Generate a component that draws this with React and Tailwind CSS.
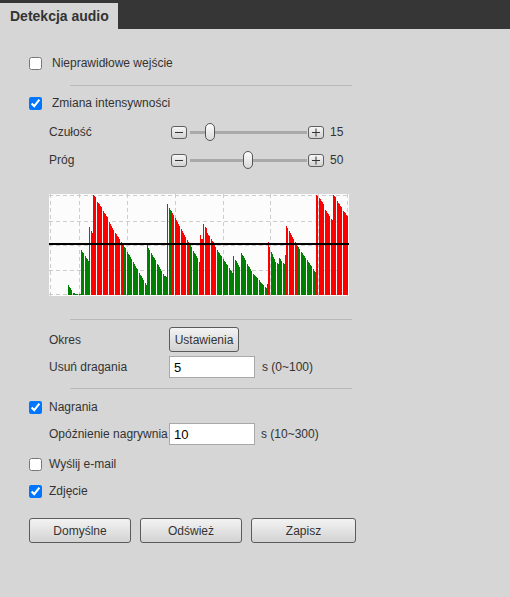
import React from "react"

// level bars: [x0, x1, h0, h1, colour]
const segs = [
    [19, 23, 10, 5, "g"],
    [24, 27, 2, 1, "g"],
    [27, 32, 1, 1, "g"],
    [32, 40, 45, 34, "g"],
    [40, 42, 68, 68, "r"],
    [42, 44, 64, 62, "r"],
    [44, 48, 100, 97, "r"],
    [48, 54, 93, 87, "r"],
    [54, 60, 84, 76, "r"],
    [60, 66, 73, 63, "r"],
    [66, 72, 62, 55, "r"],
    [72, 74, 53, 52, "r"],
    [74, 98, 50, 10, "g"],
    [98, 99, 51, 51, "r"],
    [99, 116, 47, 19, "g"],
    [116, 118, 19, 18, "g"],
    [118, 122, 91, 85, "g"],
    [122, 141, 84, 51, "r"],
    [141, 151, 50, 33, "g"],
    [151, 152, 60, 60, "r"],
    [152, 154, 56, 56, "r"],
    [154, 158, 71, 67, "r"],
    [158, 166, 62, 51, "r"],
    [166, 184, 48, 22, "g"],
    [184, 191, 39, 28, "g"],
    [191, 204, 44, 22, "g"],
    [204, 218, 21, 7, "g"],
    [218, 219, 11, 11, "g"],
    [219, 220, 53, 53, "r"],
    [220, 226, 48, 36, "g"],
    [226, 230, 33, 31, "g"],
    [230, 233, 37, 34, "g"],
    [233, 236, 32, 31, "g"],
    [236, 237, 40, 40, "g"],
    [237, 248, 69, 51, "r"],
    [248, 267, 49, 23, "g"],
    [267, 270, 100, 98, "r"],
    [270, 276, 97, 90, "r"],
    [276, 284, 85, 75, "r"],
    [284, 288, 100, 97, "r"],
    [288, 294, 94, 86, "r"],
    [294, 300, 84, 78, "r"],
]

const bars = []
segs.forEach(([x0, x1, h0, h1, c]) => {
    for (let x = x0; x < x1; x++) {
        if (x % 6 === 5) continue
        const t = x1 - x0 > 1 ? (x - x0) / (x1 - x0 - 1) : 0
        const h = Math.round(h0 + (h1 - h0) * t)
        bars.push({ x, h, c })
    }
})

function Chart() {
    const H = 101
    return (
        <svg width="300" height="102" className="block" shapeRendering="crispEdges">
            <rect x="0" y="0" width="300" height="102" fill="#fcfcfc" />
            <g stroke="#cdcdcd" strokeWidth="1" strokeDasharray="4 3">
                {[1, 27, 51, 76, 100].map((y) => (
                    <line key={y} x1="0" x2="300" y1={y + 0.5} y2={y + 0.5} />
                ))}
                {[1, 30, 78, 126, 174, 221, 269, 298].map((x) => (
                    <line key={x} x1={x + 0.5} x2={x + 0.5} y1="0" y2="102" />
                ))}
            </g>
            {bars.map((b) => (
                <rect key={b.x} x={b.x} y={H - b.h} width="1" height={b.h} fill={b.c === "r" ? "#ff0000" : "#008000"} />
            ))}
            <rect x="0" y="49" width="300" height="2" fill="#000" />
        </svg>
    )
}

function Step({ plus }) {
    return (
        <div className="w-[16px] h-[13px] rounded-[3px] border border-[#5f5f5f] bg-gradient-to-b from-[#f6f6f6] to-[#d2d2d2] flex items-center justify-center">
            <svg width="10" height="9" viewBox="0 0 10 9">
                <rect x="1" y="4" width="8" height="1" fill="#333" />
                {plus && <rect x="4.5" y="0.5" width="1" height="8" fill="#333" />}
            </svg>
        </div>
    )
}

function Slider({ pos, value }) {
    return (
        <div className="flex items-center">
            <Step />
            <div className="relative w-[117px] h-[19px] ml-[3px] mr-[1px] flex items-center">
                <div className="w-full h-[3px] bg-[#a9a9a9]" />
                <div
                    className="absolute top-0 w-[10px] h-[18px] rounded-[5px] border border-[#555] bg-gradient-to-b from-[#fdfdfd] to-[#d9d9d9]"
                    style={{ left: pos }}
                />
            </div>
            <Step plus />
            <span className="ml-[6px]">{value}</span>
        </div>
    )
}

function Check({ label, on, gap }) {
    return (
        <label className={`flex items-center h-[20px] ${gap}`}>
            <input type="checkbox" defaultChecked={on} className="w-[13px] h-[13px] m-0 accent-[#0075ff]" />
            <span>{label}</span>
        </label>
    )
}

function Row({ label, children, className }) {
    return (
        <div className={`flex items-center pl-[20px] ${className}`}>
            <span className="w-[120px] whitespace-nowrap">{label}</span>
            {children}
        </div>
    )
}

const Sep = ({ className }) => <div className={`ml-[41px] w-[282px] h-px bg-[#b9b9b9] ${className}`} />

const btn =
    "h-[25px] rounded-[3px] border border-[#5b5b5b] bg-gradient-to-b from-[#f3f3f3] to-[#d3d3d3] text-[#333] text-[12px]"

export default function App() {
    return (
        <div className="w-[510px] h-[597px] bg-[#d6d6d6] text-[12px] text-[#333] font-['Liberation_Sans',Arial,sans-serif]">
            <div className="h-[29px] bg-[#363636] flex items-end">
                <div className="h-[26px] w-[118px] bg-[#d6d6d6] pl-[10px] flex items-center text-[14px] font-bold text-[#333]">
                    Detekcja audio
                </div>
            </div>
            <div className="pl-[29px] flex flex-col">
                <Check label="Nieprawidłowe wejście" gap="gap-[10px] mt-[24px]" />
                <Sep className="mt-[12px]" />
                <Check label="Zmiana intensywności" on gap="gap-[10px] mt-[7px]" />
                <Row label="Czułość" className="h-[20px] mt-[9px]">
                    <div className="ml-[2px]">
                        <Slider pos={15} value="15" />
                    </div>
                </Row>
                <Row label="Próg" className="h-[20px] mt-[8px]">
                    <div className="ml-[2px]">
                        <Slider pos={53} value="50" />
                    </div>
                </Row>
                <div className="pl-[20px] mt-[24px]">
                    <Chart />
                </div>
                <Sep className="mt-[23px]" />
                <Row label="Okres" className="mt-[7px]">
                    <button className={`${btn} w-[70px]`}>Ustawienia</button>
                </Row>
                <Row label="Usuń dragania" className="mt-[4px]">
                    <input
                        defaultValue="5"
                        className="w-[86px] h-[22px] bg-white border border-[#a9a9a9] px-[4px] text-[13px] text-black outline-none"
                    />
                    <span className="ml-[7px]">s (0~100)</span>
                </Row>
                <Sep className="mt-[10px]" />
                <Check label="Nagrania" on gap="gap-[7px] mt-[8px]" />
                <Row label="Opóźnienie nagrywnia" className="mt-[6px]">
                    <input
                        defaultValue="10"
                        className="w-[86px] h-[22px] bg-white border border-[#a9a9a9] px-[4px] text-[13px] text-black outline-none"
                    />
                    <span className="ml-[6px]">s (10~300)</span>
                </Row>
                <Check label="Wyślij e-mail" gap="gap-[7px] mt-[9px]" />
                <Check label="Zdjęcie" on gap="gap-[7px] mt-[7px]" />
                <div className="flex gap-[9px] mt-[17px]">
                    <button className={`${btn} w-[102px]`}>Domyślne</button>
                    <button className={`${btn} w-[102px]`}>Odśwież</button>
                    <button className={`${btn} w-[105px]`}>Zapisz</button>
                </div>
            </div>
        </div>
    )
}
